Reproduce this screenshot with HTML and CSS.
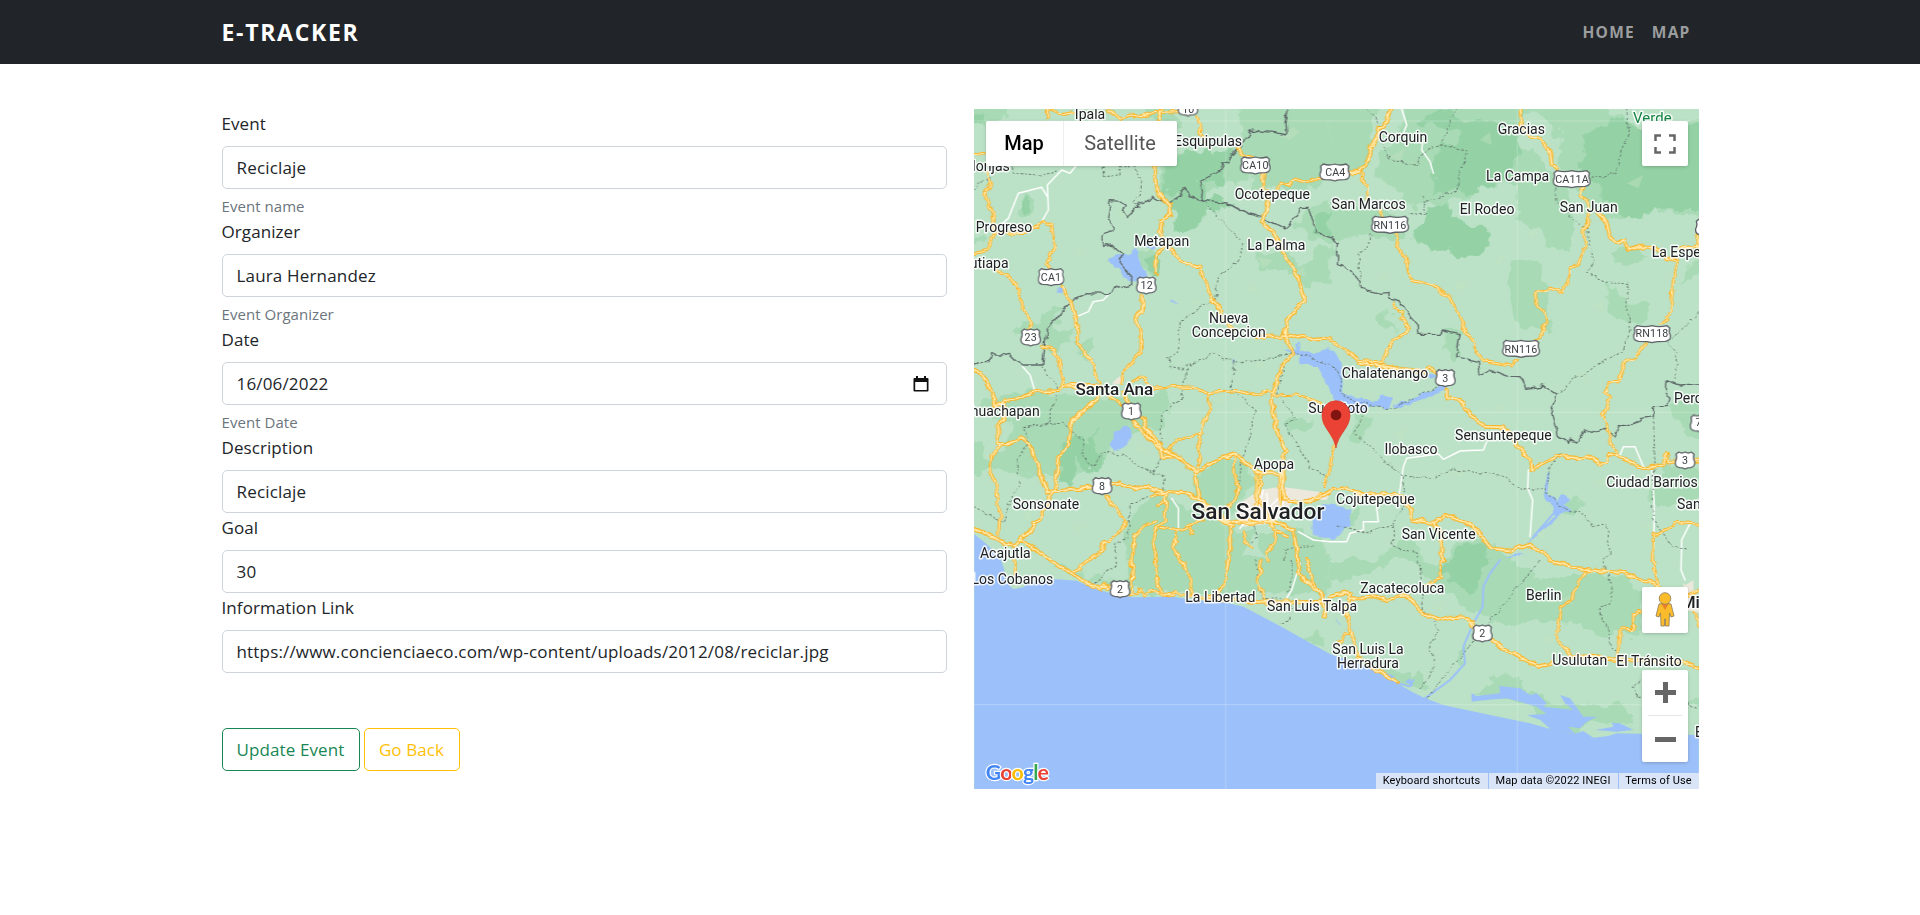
FILE: index.html
```html
<!DOCTYPE html>
<html lang="en">
<head>
<meta charset="utf-8">
<title>E-Tracker</title>
<link rel="stylesheet" href="styles.css">
</head>
<body>
<header class="navbar">
  <div class="container nav-inner">
    <a class="brand">E-TRACKER</a>
    <nav class="nav-links"><a>HOME</a><a>MAP</a></nav>
  </div>
</header>
<main class="container columns">
  <form class="form">
    <label class="label">Event</label>
    <input class="control" type="text" value="Reciclaje">
    <div class="help">Event name</div>
    <label class="label">Organizer</label>
    <input class="control" type="text" value="Laura Hernandez">
    <div class="help">Event Organizer</div>
    <label class="label">Date</label>
    <div class="control date"><span>16/06/2022</span>
      <svg width="16" height="18" viewBox="0 0 16 18"><path fill="#111" fill-rule="evenodd" d="M3 1h2v2h6V1h2v2h1.500q1 0 1 1v11.500q0 1-1 1h-13q-1 0-1-1V4q0-1 1-1H3zM2.200 7v8h11.600V7z"/></svg>
    </div>
    <div class="help">Event Date</div>
    <label class="label">Description</label>
    <input class="control" type="text" value="Reciclaje">
    <label class="label">Goal</label>
    <input class="control" type="text" value="30">
    <label class="label">Information Link</label>
    <input class="control" type="text" value="https://www.concienciaeco.com/wp-content/uploads/2012/08/reciclar.jpg">
    <div class="actions">
      <button type="button" class="btn btn-update">Update Event</button>
      <button type="button" class="btn btn-back">Go Back</button>
    </div>
  </form>

  <section class="map">
    <svg class="canvas" viewBox="42 27 2175 2040" width="725" height="680">
      <defs>
        <filter id="organic" filterUnits="userSpaceOnUse" x="0" y="0" width="2260" height="2100" color-interpolation-filters="sRGB">
          <feTurbulence type="fractalNoise" baseFrequency=".02" numOctaves="3" seed="4" result="n"/>
          <feDisplacementMap in="SourceGraphic" in2="n" scale="60" xChannelSelector="R" yChannelSelector="G"/>
        </filter>
        <filter id="wavy" filterUnits="userSpaceOnUse" x="0" y="0" width="2260" height="2100" color-interpolation-filters="sRGB">
          <feTurbulence type="fractalNoise" baseFrequency=".035" numOctaves="2" seed="9" result="n"/>
          <feDisplacementMap in="SourceGraphic" in2="n" scale="20" xChannelSelector="R" yChannelSelector="G"/>
        </filter>
        <path id="shield-s" d="M-27-18L-19-25Q-10-19 0-25Q10-19 19-25L27-18Q23-6 29 4Q31 20 16 22Q7 22 0 26Q-7 22-16 22Q-31 20-29 4Q-23-6-27-18Z"/>
        <path id="shield-m" d="M-42-18L-34-25Q-16-19 0-25Q16-19 34-25L42-18Q38-6 44 4Q46 20 30 22Q10 22 0 26Q-10 22-30 22Q-46 20-44 4Q-38-6-42-18Z"/>
        <path id="shield-l" d="M-53-18L-45-25Q-20-19 0-25Q20-19 45-25L53-18Q49-6 55 4Q57 20 40 22Q12 22 0 26Q-12 22-40 22Q-57 20-55 4Q-49-6-53-18Z"/>
        <g id="minor-roads">
          <path d="M262 27V55M270 30L300 45L340 38M445 27L480 58L510 45L545 50L580 38L655 35M605 27L595 60M30 155L80 162M82 215L90 260L75 285L100 350L105 395L80 450L30 465M105 398L190 400L230 378L250 365L275 375L282 440L260 490L275 510M108 510L150 530L178 570L190 630L215 665L205 690"/>
          <path d="M710 50L722 75L720 100L740 130M945 270L960 245L985 255L1010 240L1040 250L1070 232L1100 235"/>
          <g transform="translate(1110)">
            <path d="M95 218L100 250L112 260L108 300M150 330L155 350M198 400L205 415L200 440L228 475L235 515L250 542L320 560L360 590L390 655L405 690M187 607L195 625L215 635L212 655L230 665L235 690M775 320V370L760 395L768 440L745 490L720 500V530L695 575L660 565L615 580L622 615L640 635L648 665L635 690M1045 480L1030 545L1022 625L1012 660L990 672"/>
          </g>
          <g transform="translate(0 690)">
            <path d="M355 0V40L375 75L405 105V130L420 160M543 0V60L510 105L490 125L485 160M250 50L285 60L300 120L310 165L345 163M515 155L540 140L565 165L580 175L640 170L700 172L735 188L830 182L880 195L930 185L950 198L1010 195L1075 215L1095 235M745 190L752 240L735 270L725 310L715 350L722 385L705 430M625 360L650 330L690 320L730 308M125 345L98 375L90 430L108 460L120 560L115 615M825 375L820 430L835 470L825 510L800 535M435 495L460 530L500 570L480 610L440 635L410 675L380 690M575 495L620 485L615 510L590 530M588 570L548 590L520 630L515 690M590 592L580 640L590 690M600 592L660 600L730 570M655 600L640 650L660 690M690 595L698 612M850 605L855 630L872 655M620 490L615 570L590 590M950 605L945 640L920 670L925 690M890 430V530M960 430V520M940 600L980 620M1040 520L1080 490"/>
            <path d="M1090 235L1095 280L1130 330L1115 380L1108 430L1095 470"/>
          </g>
          <g transform="translate(1110 690)">
            <path d="M0 30L45 60L90 92L160 97L180 45L215 15L235 0M400 0L430 35L440 70L460 95L545 108L560 90M635 0L630 22L610 32M950 35L915 85L885 95L862 155L838 155L822 188L845 200L818 255L838 305L840 340L870 380M975 615L1045 578L1120 583M970 612L967 690"/>
          </g>
          <g transform="translate(0 1380)">
            <path d="M165 0V45M380 0L340 40M515 0L518 40L512 105M585 0L595 80L605 100M660 0L690 50L695 100M905 0L895 60L915 120M385 72L400 85L410 75L420 88L430 72L445 85L460 70M510 105L530 100L540 88L555 102L570 92L600 100L640 106L650 93L665 108L700 108L760 120"/>
          </g>
          <g transform="translate(1110 1380)">
            <path d="M330 0V55L290 75M50 160L65 225L85 285M65 222L45 225L30 250M765 35L735 90L725 115L695 140L690 180L680 200V240L710 270L725 290M935 155L910 165V208L870 210L862 290M968 0L985 75M1050 115L1120 90M1095 160L1107 200"/>
          </g>
        </g>
        <g id="main-roads">
          <path d="M583 190L588 260L605 295L630 315L632 340L605 360L600 400L620 435L605 450L590 460L588 520M625 435L670 490L720 500L745 570L760 600L775 620L780 645M820 690L790 660M910 220V270M925 275L918 330L905 365L940 395L965 450L1000 500L1035 605L980 660L975 690M545 590L548 630L525 650L540 690M305 560L325 590L345 650L355 690M835 140L850 165L880 175M1145 218L1180 220M605 27L600 60"/>
          <g transform="translate(1110)"><path d="M183 27L170 70L145 85L140 115L118 145V180L80 220L55 215M570 15L575 75L600 110L635 118L660 155L665 190L680 210M760 262L752 285L775 310V330M800 335L830 370L840 410L865 430L880 420L895 450L930 440L965 440L1010 475L1040 480M1055 445L1120 437M1105 435V405"/></g>
          <g transform="translate(0 690)">
            <path d="M30 115L65 132L98 190L105 225M105 230L130 210L150 215L230 185L300 183L310 170L350 170L390 165L430 175M130 220V270L115 285V320L110 340L135 345L180 325L205 340L225 380L240 430L265 490M415 205L370 245L335 270L325 345L298 375L283 485L250 540L235 575L180 630L160 650L30 590M283 485L400 472M455 465L480 460L510 470L570 475L610 485L680 490L720 510M265 490L283 485M185 630L270 690M445 200L480 222M520 275L555 310L605 360L650 375L705 430L720 510L760 555L820 590M490 190L510 225L555 270V290L600 345L605 380H635M705 430L760 395L825 372L880 420L905 430L890 520L870 575M975 0L978 30L997 70L965 110L935 200L940 260L955 320L978 360L970 390V505M905 430H965L970 505L1010 520L1045 515L1110 485M720 510L800 575H940L1000 600L1015 690M810 590V690M900 510L940 590M980 22L1020 15L1060 30L1110 25M890 22L980 18"/>
          </g>
          <g transform="translate(1110 690)"><path d="M0 480L40 472L75 485L110 492L210 495L240 530L248 570L310 578L345 555L400 575L440 600L485 655L540 662L600 645L640 670L660 690M90 98L200 115L285 125L300 108L315 130M350 180V205L395 210L405 240L430 260L465 290L520 292L540 305L560 345L600 385L603 420L680 378L755 385L780 378L810 400L830 398L835 375L870 380L940 415L1000 405L1010 370L1015 395H1120M310 578L335 620L338 690"/></g>
          <g transform="translate(0 1380)"><path d="M265 0L330 35L385 75L440 82M805 0L795 60L775 100M1010 0L1030 60L1085 100L1095 170M740 110L910 128L1110 125M1040 0L1060 70L1085 100"/></g>
          <g transform="translate(1110 1380)"><path d="M0 110L50 100L60 115H100L130 108L170 120L225 103L290 170L325 180L370 170L415 175L430 195M485 240L540 278L625 318L670 310M655 0L740 25L865 35L985 77M725 290L750 285L860 300L1060 305L1120 325M85 290L140 330L200 367M60 100L50 160"/></g>
        </g>
      </defs>
      <rect class="land" x="0" y="0" width="2300" height="2100"/>

      <g filter="url(#organic)">
      <g class="green">
        <path d="M830 0H1110V220L1050 260L1030 300L960 255L900 265L860 220L830 270L790 240L700 290L690 395L640 395L655 350L600 280L600 190L650 160L720 200L850 130Z"/>
        <path d="M20 0H130L145 50L80 70H20ZM540 0L640 0L650 70L560 60ZM180 290L205 275L235 330L215 352L170 345ZM535 460L570 445L605 465L600 520L570 530L535 495ZM330 605L260 690H160L230 650ZM890 455L990 455L1020 500L1110 430V550L1030 560L1000 515L900 510ZM1040 325L1110 300V430L1060 425L1010 380ZM20 430L60 410L70 430L60 440H20Z"/>
        <g transform="translate(1110)"><path d="M0 0H140L120 170L90 210L50 240L0 200ZM0 310L120 310L200 340L210 390L230 420L130 420L80 400L40 430L0 410ZM230 0L740 0L770 75L745 120L690 110L630 40L560 50L570 250L450 260L380 300L320 320L230 310L140 220L150 170L200 130ZM560 130L660 200L720 300L730 370L715 450L650 450L645 410L610 370L560 350ZM740 0L960 90L1140 60V350L990 335L850 360L800 340L720 250L680 190ZM840 460L910 435L935 470L870 505ZM530 510L580 480L625 490L655 570L650 640L680 690H590L560 660L535 560ZM820 560L850 550L880 600L960 605L950 670L910 675L850 650ZM135 650L170 615L195 690H165ZM1050 550L1075 500L1130 450V520Z"/></g>
        <g transform="translate(0 690)"><path d="M160 0L260 0L350 0L330 45L270 70L250 30ZM20 325L70 345V430H20ZM60 220L210 180L330 190L440 200L620 190L615 290L480 305L440 370L410 410L340 445L180 430L20 410L120 370L170 280L100 270ZM700 440L790 385L870 405L900 450L820 530L790 560L720 520L700 480ZM490 570L560 530L610 490L690 540L770 560L820 600L880 610L850 690H500ZM980 270L1020 255L1050 270L1030 315L980 295ZM340 45L400 30L380 90ZM900 610L1000 600L1090 640L1100 690H900Z"/></g>
        <g transform="translate(1110 690)"><path d="M350 0H400L380 90L340 80ZM50 310L90 240L125 260L115 320L90 350L50 325ZM60 530L85 540L70 590L20 600L40 560ZM1030 215L1130 200V320L1060 320L1030 280ZM960 440L1050 400L1130 430V500L1000 540L960 505ZM700 500L740 495L750 520L720 545L695 530ZM130 690L150 660L220 635L270 660V690ZM345 645L420 620L490 640L530 690H350Z"/></g>
        <g transform="translate(0 1380)"><path d="M130 0H260L340 45L400 70L500 80L530 100L700 105L780 90L860 100L1110 100V0H515L500 60L450 65L380 55L340 30L280 0ZM1020 235L1050 230L1060 210L1080 215L1080 255L1060 260Z"/></g>
        <g transform="translate(1110 1380)"><path d="M0 0H170L130 40L60 70L0 60ZM240 0H560L620 60L700 55L900 50L935 100V210L830 230L720 180L590 190L480 180L380 130L300 60ZM110 320L160 310L220 325L290 350L280 390L240 385ZM425 400L480 385L510 335L600 380L660 420L740 435L870 435L900 470L905 505L840 505L780 480L740 530L690 510L590 440L520 410ZM400 250L415 300L395 315L390 280ZM960 350L1000 345L1040 390L1020 410L970 390ZM1070 430L1130 400V450Z"/></g>
      </g>
      <g class="forest">
        <path d="M610 200L690 160L780 140L815 160L790 200L795 250L725 240L730 290L800 310L830 310L790 330L740 325L735 360L690 395L640 395L660 350L625 310L665 270L610 285ZM560 480L605 460L600 520L575 530ZM175 300L200 285L215 330L190 345ZM1060 350L1110 330V410L1070 405ZM20 45L70 40L80 60L20 70Z"/>
        <g transform="translate(1110)"><path d="M250 60L350 27L400 70L460 60L560 110L570 140L530 240L460 260L380 275L305 275L325 140L380 130L400 90ZM850 55L960 90L1140 80V330L1000 330L900 360L850 330L800 255L740 190L770 150L750 110ZM240 380L300 340L340 310L370 350L475 380L470 440L440 470L340 455L260 430Z"/></g>
        <g transform="translate(0 690)"><path d="M315 325L345 315L380 330L405 310L405 350L425 370L425 420L400 430L355 380L335 455L300 455L300 390Z"/></g>
        <g transform="translate(1110 690)"><path d="M360 655L420 630L475 655L460 690H370Z"/></g>
        <g transform="translate(1110 1380)"><path d="M330 20L370 0H470L455 60L430 110L390 80L350 60Z"/></g>
      </g>
      </g>
      <g class="relief">
        <path d="M150 570l30-25l-10 40zM95 95l40-20l-20 40zM480 330l30 20l-40 5zM890 470l50 10l-30 25zM340 460l25-15l5 30zM700 590l25 20l-30 5zM860 570l35-20l-5 35zM960 110l40-30l20 15l-30 25zM1000 520l30-20l10 30zM1290 170l45-25l-15 40zM1250 540l30-20l10 15zM1480 560l40-30l-10 45zM1600 480l35-15l-15 35zM1780 560l30-20l-5 40zM2000 250l50-25l-15 40zM2050 160l40-20l10 30zM1900 620l30-20l5 35zM1700 400l40-20l-20 40zM1560 120l30-25l5 40z"/>
        <path d="M180 1250l35-25l-5 40zM340 1280l40-10l-25 30zM520 1050l30-15l10 30zM760 900l35-20l-10 40zM880 800l25-20l10 30zM1200 900l30-15l5 25zM1300 1000l40-15l-15 35zM1470 1120l35-20l5 35zM1600 930l30-20l10 30zM1700 1020l35-10l-15 30zM1850 830l25-20l5 35zM1900 1150l35-20l5 30zM2040 1280l30-15l10 30zM1720 1300l40-20l-10 35zM1420 1520l35-15l-10 30zM1740 1620l35-15l5 25zM1800 1500l30-15l10 30z"/>
      </g>
      <g class="urban">
        <path d="M840 1210L900 1170L960 1160L1110 1180L1100 1200L1000 1200L985 1225L940 1270L850 1280L830 1250ZM455 850L480 828L490 855ZM2170 1460L2200 1440V1480L2220 1500V1540L2180 1530Z"/>
        <path d="M2170 1450l30 20v60l-25 5z"/>
      </g>

      <g class="water">
        <path d="M42 1302L75 1328L120 1370L133 1410L140 1450L160 1468L190 1462L205 1448L290 1438L350 1442L400 1465L470 1485L520 1492L640 1490L700 1500L790 1506L850 1520L960 1578L1110 1662L1220 1700L1310 1748L1350 1772L1395 1795L1450 1815L1590 1845L1710 1870L1810 1898L1840 1902L1870 1893L1900 1913L1945 1908L1970 1900L2217 1905V2067H42Z"/>
        <path filter="url(#wavy)" d="M442 478L475 465L500 465L530 450L540 490L562 520L558 540L515 545L495 535L480 510L455 500ZM292 562L310 565L305 580L290 578ZM630 600L655 612L635 608ZM550 435L590 440L580 450ZM452 1035L462 995L490 980L512 983L516 1015L495 1042L465 1053ZM1055 1295L1060 1250L1085 1215L1145 1220L1175 1230L1165 1280L1120 1320L1075 1310Z"/>
        <path filter="url(#wavy)" d="M1020 750L1050 760L1110 745L1145 790L1150 880L1240 905L1270 885L1295 895L1290 925L1230 915L1200 940L1140 930L1110 870L1070 800L1020 790ZM970 750L1010 745L1015 720L1022 760L1000 765ZM820 780L830 790L820 795ZM1300 915L1370 895L1390 880L1450 855L1455 870L1400 895L1320 925ZM1390 818L1430 830L1410 840Z"/>
        <path filter="url(#wavy)" d="M1752 1145L1770 1115L1760 1150V1180L1790 1200L1810 1185L1832 1200L1810 1215L1835 1230L1800 1245L1780 1270L1730 1305L1710 1330L1705 1325L1750 1280L1785 1250L1780 1215L1760 1200ZM1130 1555l10 15l-3 8zM1630 1370L1700 1358L1670 1372Z"/>
        <g transform="translate(1110 1380)"><path d="M424 400L440 408L510 400L508 378L570 385L600 405L620 400L650 430L640 440L730 450L705 430L690 405L720 415L760 470L800 470L770 485L750 505L715 500L735 522L670 515L630 480L590 465L650 462L620 440L570 425L530 415L470 420L425 425ZM795 510L850 500L845 488L870 490L910 510L860 515ZM212 375L240 355L250 380L225 365Z"/></g>
      </g>
      <g class="river">
        <path d="M1765 1120L1758 1185L1790 1230L1720 1310M1620 1380L1590 1420L1570 1460L1568 1520L1540 1570L1510 1640L1515 1690L1470 1740L1395 1795M1456 850L1400 890L1340 910"/>
        <path d="M1240 1710l60 20l-20 10M1300 1745l50 15l10-20"/>
      </g>
      <g class="grid"><path d="M42 63H2217M42 937H2217M42 1814H2217M797 27V2067M1672 27V2067"/></g>

      <g class="local">
        <path d="M350 195L330 220L305 210L262 255L265 330L245 365M262 290L245 262L175 280L145 355L110 385M450 580L430 600L400 605L385 635L350 650M1325 27L1340 75L1330 100M1388 125L1385 150L1410 185L1420 220M188 800L210 825L225 875M1318 1180L1330 1100L1340 1075L1435 1062L1450 1078L1500 1053L1570 1050L1580 1025M1705 1110L1703 1165L1718 1200L1710 1310M2075 1110L2082 1200V1300M1980 1065L1990 1040L2025 1040L2050 1100M2190 1270L2165 1320L2163 1410L2175 1440M1110 1325L1160 1325L1170 1300L1210 1290L1210 1265H1255L1250 1225M635 1195L655 1225L655 1290M1015 1295L1060 1320L1110 1325M1020 1390L995 1470L970 1510M840 1285L900 1210L910 1170M860 1240H980M880 1270L960 1190M920 1180L930 1280M980 1180L950 1260"/>
      </g>
      <g filter="url(#wavy)">
      <g class="district">
        <path d="M160 200L165 220L240 225L300 215M42 275L60 245L100 235M430 200V230L480 225V200L520 200L545 245L540 290L520 310L540 325M735 305L780 360L850 430L830 490L775 530L765 600L710 630L660 665L655 760L625 770L630 800L665 805L720 780L770 760L825 790L940 775L1000 755L1060 775L1110 790L1140 830L1145 880L1200 910L1300 925L1450 850"/>
        <path d="M1215 27L1255 65L1270 130L1280 170L1370 200L1380 160L1440 135L1490 27M1440 135L1520 150L1500 220L1490 270L1390 310L1390 290M1390 310L1400 345L1345 340M2000 27L2005 110L1980 160L1970 220L1890 235M1790 255V300L1850 370L1880 380L1900 480L1880 520L1950 550L2010 550L1995 620L2010 650L2010 690L1990 750L1900 800L1800 870L1790 890M1230 400L1225 440L1195 460L1205 550M2217 640L2120 730L2150 760L2145 840M685 805L665 870L660 900L610 940L600 1010L605 1070L580 1120M825 790L810 860L885 930L870 1020L845 1080L835 1180M975 800L950 880L1010 960L975 970L1050 1100L1110 1140M245 800L295 860L265 970L190 980L205 1020L170 1090L180 1150L150 1200L130 1270L42 1220M190 980L310 970L375 1030L365 1070L400 1100L430 1055L500 1065L530 1100L610 1130L605 1170L510 1215L505 1310L470 1330L465 1400L385 1460M1210 950L1180 1000L1250 1060L1330 1130V1230L1300 1260L1300 1340L1370 1360L1380 1400L1390 1530L1440 1590L1410 1630L1425 1700L1380 1770M1330 1130L1430 1130L1480 1110L1620 1125L1690 1170L1755 1165M1800 1060L1770 1100L1755 1170L1810 1230L1860 1235L1900 1280L1940 1270L1950 1360L1930 1380L1955 1460V1510L1920 1520V1560L1950 1580V1640L1980 1660M2080 940L2085 1100L2075 1180L2080 1260L2140 1340L2180 1350M1740 1380L1400 1795M2040 1740L2020 1760L2030 1790L2110 1780L2217 1830M890 1380L895 1450L910 1500L960 1495L995 1520L985 1560L960 1577M990 1380L1000 1420L980 1480M1130 1275L1230 1300L1260 1280L1300 1275M880 1260L890 1310L875 1330M975 1380V1345L1060 1340"/>
      </g>
      <g class="border">
        <path d="M983 15L975 70L978 105L945 98L870 90L855 125L815 165L805 185L785 190L790 210L725 240L730 275L725 300L690 290L680 265L665 270L660 290L625 310L580 290L555 305L540 310L530 325L515 325L512 345L500 350L490 335L500 308L450 305L443 355L462 388L430 405L428 440L455 435L487 460L480 490L515 530V555L475 565L440 580L380 578L335 603L300 640L260 690L248 795L190 795L165 780L145 760L125 765L95 765L90 785L55 785L30 800"/>
        <path d="M725 300L800 312L890 345L980 388L1020 325L1045 325L1070 400L1120 415L1125 430H1135L1132 490L1170 510L1200 545V565L1260 580L1290 577L1290 595L1320 603L1350 650L1375 680L1376 703L1440 703L1450 690L1500 700L1490 770L1555 785L1560 825L1590 810L1645 830L1680 830L1700 865L1750 858L1790 885L1775 940L1795 1010L1825 1030L1830 1020L1855 1025L1875 990L1895 1000L1935 985L1965 1005L1980 975L2015 980L2040 955L2080 950V920L2125 920L2133 895L2115 880L2118 842L2160 855L2230 850"/>
      </g>

      <g class="road-case minor"><use href="#minor-roads"/></g>
      <g class="road-case"><use href="#main-roads"/></g>
      <g class="road-fill minor"><use href="#minor-roads"/></g>
      <g class="road-fill"><use href="#main-roads"/></g>
      </g>

      <g class="shields">
        <use href="#shield-s" x="684" y="22"/><use href="#shield-m" x="886" y="196"/><use href="#shield-m" x="1124" y="217"/><use href="#shield-m" transform="translate(273 531) scale(.86 1)"/><use href="#shield-s" x="559" y="556"/><use href="#shield-s" x="212" y="712"/><use href="#shield-s" x="514" y="934"/><use href="#shield-s" x="426" y="1158"/><use href="#shield-s" x="480" y="1467"/>
        <use href="#shield-l" x="1835" y="237"/><use href="#shield-l" x="1290" y="374"/><use href="#shield-l" x="2076" y="702"/><use href="#shield-l" x="1683" y="746"/><use href="#shield-s" x="1456" y="834"/><use href="#shield-s" x="2175" y="1081"/><use href="#shield-s" x="2220" y="970"/><use href="#shield-s" x="1567" y="1600"/><use href="#shield-s" x="2236" y="382"/>
      </g>
      <g class="shield-text">
        <text x="685" y="38">10</text><text x="886" y="208">CA10</text><text x="1126" y="228">CA4</text><text x="273" y="543">CA1</text><text x="560" y="568">12</text><text x="212" y="723">23</text><text x="513" y="946">1</text><text x="426" y="1169">8</text><text x="480" y="1478">2</text><text x="1836" y="248">CA11A</text><text x="1290" y="387">RN116</text><text x="2076" y="712">RN118</text><text x="1683" y="758">RN116</text><text x="1456" y="846">3</text><text x="2175" y="1093">3</text><text x="2216" y="979">7</text><text x="1567" y="1611">2</text>
      </g>
      <g class="places">
        <text x="390" y="57">Ipala</text><text x="744" y="137">Esquipulas</text><text x="80" y="213">Monjas</text><text x="937" y="298">Ocotepeque</text><text x="132" y="396">Progreso</text><text x="605" y="438">Metapan</text><text x="949" y="450">La Palma</text><text x="76" y="503">Jutiapa</text><text x="806" y="669">Nueva</text><text x="806" y="711">Concepcion</text>
        <text x="1329" y="125">Corquin</text><text x="1684" y="102">Gracias</text><text x="1673" y="243">La Campa</text><text x="1226" y="328">San Marcos</text><text x="1581" y="342">El Rodeo</text><text x="1886" y="337">San Juan</text><text x="2075" y="472" class="start">La Esperanza</text>
        <text x="122" y="949">Ahuachapan</text><text x="1134" y="940">Suchitoto</text><text x="942" y="1108">Apopa</text><text x="258" y="1226">Sonsonate</text><text x="136" y="1373">Acajutla</text><text x="157" y="1451">Los Cobanos</text>
        <text x="1275" y="834">Chalatenango</text><text x="1630" y="1021">Sensuntepeque</text><text x="1353" y="1063">Ilobasco</text><text x="1246" y="1212">Cojutepeque</text><text x="1436" y="1317">San Vicente</text><text x="2076" y="1161">Ciudad Barrios</text><text x="2142" y="909" class="start">Perquin</text><text x="2151" y="1228" class="start">San Miguel</text>
        <text x="781" y="1506">La Libertad</text><text x="1056" y="1534">San Luis Talpa</text><text x="1327" y="1480">Zacatecoluca</text><text x="1751" y="1500">Berlin</text><text x="1224" y="1662">San Luis La</text><text x="1224" y="1704">Herradura</text><text x="1859" y="1694">Usulutan</text><text x="2067" y="1698">El Tránsito</text><text x="2205" y="1911" class="start">El</text>
        <text x="463" y="886" class="city">Santa Ana</text><text x="2162" y="1523" class="city start">Miguel</text><text x="894" y="1257" class="capital">San Salvador</text><text x="2077" y="68" class="park">Verde</text>
      </g>
      <path fill="#ea4335" stroke="#d43a2c" stroke-width="2" d="M1128 1044C1121 1000 1086 985 1086 945A42 43 0 0 1 1170 945C1170 985 1135 1000 1128 1044Z"/>
      <circle cx="1128" cy="945" r="16" fill="#811411"/>
      <g class="logo"><text x="77" y="2040" textLength="190"><tspan fill="#4285f4">G</tspan><tspan fill="#ea4335">o</tspan><tspan fill="#fbbc05">o</tspan><tspan fill="#4285f4">g</tspan><tspan fill="#34a853">l</tspan><tspan fill="#ea4335">e</tspan></text></g>
    </svg>
    <div class="types"><span class="active">Map</span><span>Satellite</span></div>
    <div class="tool fullscreen"><svg width="22" height="20" viewBox="0 0 22 20"><path fill="none" stroke="#666" stroke-width="2.500" d="M1.500 7V1.500H7M15 1.500h5.500V7M20.500 13v5.500H15M7 18.500H1.500V13"/></svg></div>
    <div class="tool pegman"><svg width="22" height="38" viewBox="0 0 22 38"><path fill="#fbbc2b" stroke="#8b7a55" stroke-width=".8" d="M5 13Q11 11 17 13L20 25L17 26L15.500 22L15 35H11.500V28H10.500V35H7L6.500 22L5 26L2 25Z"/><path fill="#e8832a" d="M7.500 13h7L11 19z"/><circle cx="11" cy="7.500" r="5.800" fill="#fbbc2b" stroke="#8b7a55" stroke-width=".8"/></svg></div>
    <div class="tool zoom"><svg width="46" height="92" viewBox="0 0 46 92"><path fill="#666" d="M13 20h8v-8h5v8h8v5h-8v8h-5v-8h-8zM13 67h21v5H13z"/><path fill="#e6e6e6" d="M6 45h34v1H6z"/></svg></div>
    <div class="legal"><span>Keyboard shortcuts</span><span>Map data ©2022 INEGI</span><span>Terms of Use</span></div>
  </section>
</main>
</body>
</html>
```

FILE: styles.css
```css
* { box-sizing: border-box; }
body { margin: 0; background: #fff; color: #212529; font-family: "Open Sans", sans-serif; font-size: 17px; overflow: hidden; }
.container { width: 1477px; margin: 0 auto; }
.navbar { height: 64px; background: #212529; }
.nav-inner { height: 63px; display: flex; align-items: center; justify-content: space-between; padding-right: 8px; }
.brand { color: #fff; font-size: 23px; font-weight: 700; letter-spacing: 1.7px; }
.nav-links { display: flex; gap: 17px; color: #9b9d9e; font-size: 15.5px; font-weight: 700; letter-spacing: 1.2px; }
.columns { display: flex; gap: 27px; padding-top: 45px; }
.form { width: 725px; display: flex; flex-direction: column; }
.label { height: 37px; line-height: 29px; letter-spacing: .08px; }
.control { width: 725px; height: 43px; padding: 0 14px; border: 1px solid #ced4da; border-radius: 5px; background: #fff; color: #212529; font: inherit; letter-spacing: .17px; flex: none; }
.date { display: flex; align-items: center; justify-content: space-between; padding-right: 17px; }
.help { height: 28px; padding-top: 6px; line-height: 22px; color: #6c757d; font-size: 15px; letter-spacing: .05px; }
.actions { display: flex; gap: 4px; margin-top: 55px; }
.btn { height: 43px; padding: 0; border: 1px solid; border-radius: 5px; background: #fff; font: inherit; letter-spacing: .1px; }
.btn-update { color: #198754; border-color: #198754; width: 138px; }
.btn-back { color: #ffc107; border-color: #ffc107; width: 96px; }

.map { position: relative; width: 725px; height: 680px; overflow: hidden; font-family: Roboto, sans-serif; }
.canvas { display: block; }
.land { fill: #bbe2c6; }
.green { fill: #a8dab5; }
.forest { fill: #94d2a5; }
.relief { fill: #c4e2c0; opacity: .45; }
.urban { fill: #ede8dc; }
.water { fill: #9cc0f9; }
.river, .grid, .local, .district, .border, .road-case, .road-fill { fill: none; stroke-linejoin: round; stroke-linecap: round; }
.river { stroke: #9cc0f9; stroke-width: 6; }
.grid { stroke: #fff; stroke-opacity: .25; stroke-width: 3; }
.local { stroke: #fff; stroke-width: 4.5; }
.district { stroke: #65786f; stroke-width: 3; stroke-dasharray: 7 6; stroke-linecap: butt; }
.border { stroke: #5f6b6b; stroke-width: 4; }
.road-case { stroke: #fbb62b; stroke-width: 12; }
.road-fill { stroke: #ffeaab; stroke-width: 5; }
.road-case.minor { stroke-width: 9.500; }
.road-fill.minor { stroke-width: 3.5; }
.shields { fill: #fff; stroke: #5f6368; stroke-width: 4; }
.shield-text { font-size: 32px; fill: #3c4043; text-anchor: middle; letter-spacing: .5px; }
.places { font-size: 42px; fill: #202124; stroke: #fff; stroke-width: 9; stroke-linejoin: round; stroke-opacity: .85; paint-order: stroke; text-anchor: middle; }
.start { text-anchor: start; }
.city { font-size: 51px; font-weight: 500; }
.capital { font-size: 68px; font-weight: 500; }
.park { fill: #188544; font-size: 45px; }
.logo { font-family: Lato, sans-serif; font-size: 64px; font-weight: 700; stroke: #fff; stroke-width: 7; paint-order: stroke; }

.types, .tool { position: absolute; background: #fff; border-radius: 2px; box-shadow: 0 1px 4px -1px rgba(0,0,0,.3); }
.types { left: 12px; top: 12px; height: 45px; display: flex; line-height: 45px; font-size: 20px; color: #565656; text-align: center; }
.types span { width: 113px; }
.types .active { width: 78px; color: #000; font-weight: 500; border-right: 1px solid #eee; }
.tool { left: 668px; width: 46px; height: 46px; display: flex; align-items: center; justify-content: center; }
.fullscreen { top: 12px; height: 45px; }
.pegman { top: 478px; }
.zoom { top: 561px; height: 92px; }
.legal { position: absolute; right: 0; bottom: 0; display: flex; gap: 1px; height: 16px; line-height: 15px; font-size: 11px; letter-spacing: .12px; text-align: center; color: #000; white-space: nowrap; }
.legal span { background: rgba(232,238,246,.8); width: 129px; }
.legal span:first-child { width: 112px; }
.legal span:last-child { width: 80px; }
```
